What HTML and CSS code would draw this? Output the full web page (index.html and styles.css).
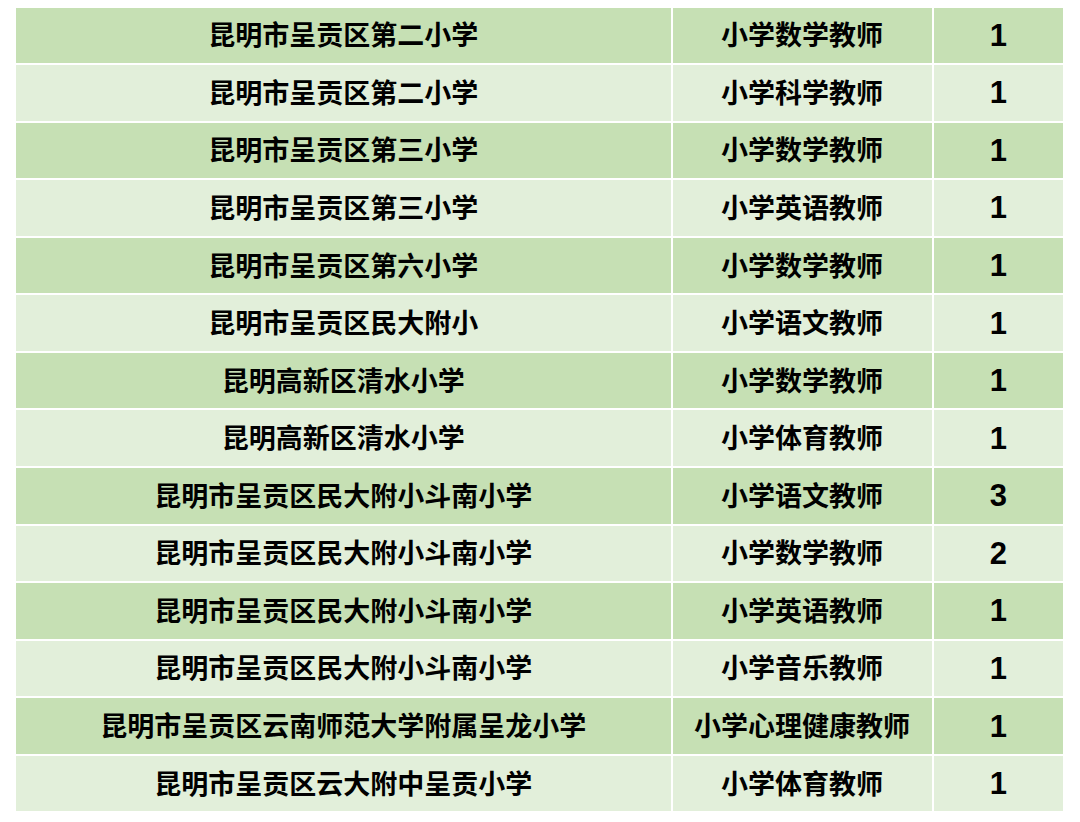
FILE: index.html
```html
<!DOCTYPE html>
<html lang="zh-CN">
<head>
<meta charset="utf-8">
<title>招聘岗位</title>
<link rel="stylesheet" href="styles.css">
</head>
<body>
<div class="grid">
  <div class="c dark">昆明市呈贡区第二小学</div><div class="c dark">小学数学教师</div><div class="c dark n">1</div>
  <div class="c light">昆明市呈贡区第二小学</div><div class="c light">小学科学教师</div><div class="c light n">1</div>
  <div class="c dark">昆明市呈贡区第三小学</div><div class="c dark">小学数学教师</div><div class="c dark n">1</div>
  <div class="c light">昆明市呈贡区第三小学</div><div class="c light">小学英语教师</div><div class="c light n">1</div>
  <div class="c dark">昆明市呈贡区第六小学</div><div class="c dark">小学数学教师</div><div class="c dark n">1</div>
  <div class="c light">昆明市呈贡区民大附小</div><div class="c light">小学语文教师</div><div class="c light n">1</div>
  <div class="c dark">昆明高新区清水小学</div><div class="c dark">小学数学教师</div><div class="c dark n">1</div>
  <div class="c light">昆明高新区清水小学</div><div class="c light">小学体育教师</div><div class="c light n">1</div>
  <div class="c dark">昆明市呈贡区民大附小斗南小学</div><div class="c dark">小学语文教师</div><div class="c dark n">3</div>
  <div class="c light">昆明市呈贡区民大附小斗南小学</div><div class="c light">小学数学教师</div><div class="c light n">2</div>
  <div class="c dark">昆明市呈贡区民大附小斗南小学</div><div class="c dark">小学英语教师</div><div class="c dark n">1</div>
  <div class="c light">昆明市呈贡区民大附小斗南小学</div><div class="c light">小学音乐教师</div><div class="c light n">1</div>
  <div class="c dark">昆明市呈贡区云南师范大学附属呈龙小学</div><div class="c dark">小学心理健康教师</div><div class="c dark n">1</div>
  <div class="c light">昆明市呈贡区云大附中呈贡小学</div><div class="c light">小学体育教师</div><div class="c light n">1</div>
</div>
</body>
</html>
```

FILE: styles.css
```css
html, body {
  margin: 0;
  padding: 0;
  background: #ffffff;
}
body {
  padding: 7.5px 0 0 16px;
}
.grid {
  display: grid;
  grid-template-columns: 654.5px 259px 129.5px;
  grid-auto-rows: 55.57px;
  gap: 2px;
  width: 1047px;
}
.c {
  display: flex;
  align-items: center;
  justify-content: center;
  padding-bottom: 3px;
  box-sizing: border-box;
  font-family: "Noto Sans CJK SC", "Liberation Sans", sans-serif;
  font-weight: bold;
  font-size: 27px;
  color: #000;
  white-space: nowrap;
}
.dark { background: #c6e0b4; }
.light { background: #e2efda; }
.n {
  padding-bottom: 0;
  padding-top: 1px;
  font-family: "Liberation Sans", Arial, sans-serif;
  font-size: 31px;
  font-weight: bold;
}
```
